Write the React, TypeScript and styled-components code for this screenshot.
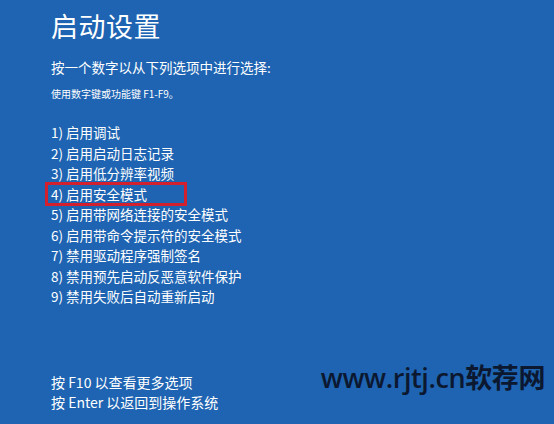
import React from "react";
import styled, {createGlobalStyle} from "styled-components";

const Global = createGlobalStyle`
  html, body {
    margin: 0;
    padding: 0;
    background: #1e64b2;
  }
`;

const Screen = styled.div`
  box-sizing: border-box;
  display: flex;
  flex-direction: column;
  width: 554px;
  height: 424px;
  padding: 8px 0 0 51px;
  background: #1e64b2;
  color: #fff;
  font-family: "Noto Sans CJK SC", "Noto Sans", sans-serif;
  overflow: hidden;
`;

const Title = styled.h1`
  margin: 0;
  font-size: 27px;
  font-weight: 400;
  line-height: 36px;
  letter-spacing: 0.5px;
`;

const Prompt = styled.div`
  margin-top: 13px;
  font-size: 13.5px;
  line-height: 20px;
`;

const Hint = styled.div`
  margin-top: 9px;
  font-size: 10px;
  line-height: 16px;
`;

const List = styled.ul`
  display: flex;
  flex-direction: column;
  margin: 20px 0 0 0;
  padding: 0;
  list-style: none;
`;

const Item = styled.li<{ $marked?: boolean }>`
  position: relative;
  font-size: 13.5px;
  line-height: 20.5px;
  height: 20.5px;

  &::after {
    content: "";
    display: ${p => (p.$marked ? "block" : "none")};
    position: absolute;
    left: -6px;
    top: -2px;
    width: 142px;
    height: 24px;
    box-sizing: border-box;
    border: 3px solid #d3202e;
  }
`;

const Footer = styled.div`
  display: flex;
  justify-content: space-between;
  margin-top: auto;
  padding: 0 9px 12px 0;
`;

const Keys = styled.div`
  display: flex;
  flex-direction: column;
  padding-top: 8px;
  font-size: 14px;
  line-height: 20px;
`;

const Watermark = styled.div`
  margin-top: -4px;
  font-family: "Open Sans", "Noto Sans CJK SC", sans-serif;
  font-weight: 600;
  font-size: 27px;
  line-height: 36px;
  color: #0b1830;
  letter-spacing: -0.4px;
`;

const items = [
    "1) 启用调试",
    "2) 启用启动日志记录",
    "3) 启用低分辨率视频",
    "4) 启用安全模式",
    "5) 启用带网络连接的安全模式",
    "6) 启用带命令提示符的安全模式",
    "7) 禁用驱动程序强制签名",
    "8) 禁用预先启动反恶意软件保护",
    "9) 禁用失败后自动重新启动",
];

const App: React.FC = () => {
    return (
        <>
            <Global/>
            <Screen>
                <Title>启动设置</Title>
                <Prompt>按一个数字以从下列选项中进行选择:</Prompt>
                <Hint>使用数字键或功能键 F1-F9。</Hint>
                <List>
                    {items.map((item, idx) => <Item key={idx} $marked={idx === 3}>{item}</Item>)}
                </List>
                <Footer>
                    <Keys>
                        <span>按 F10 以查看更多选项</span>
                        <span>按 Enter 以返回到操作系统</span>
                    </Keys>
                    <Watermark>www.rjtj.cn软荐网</Watermark>
                </Footer>
            </Screen>
        </>
    )
};

export default App;
